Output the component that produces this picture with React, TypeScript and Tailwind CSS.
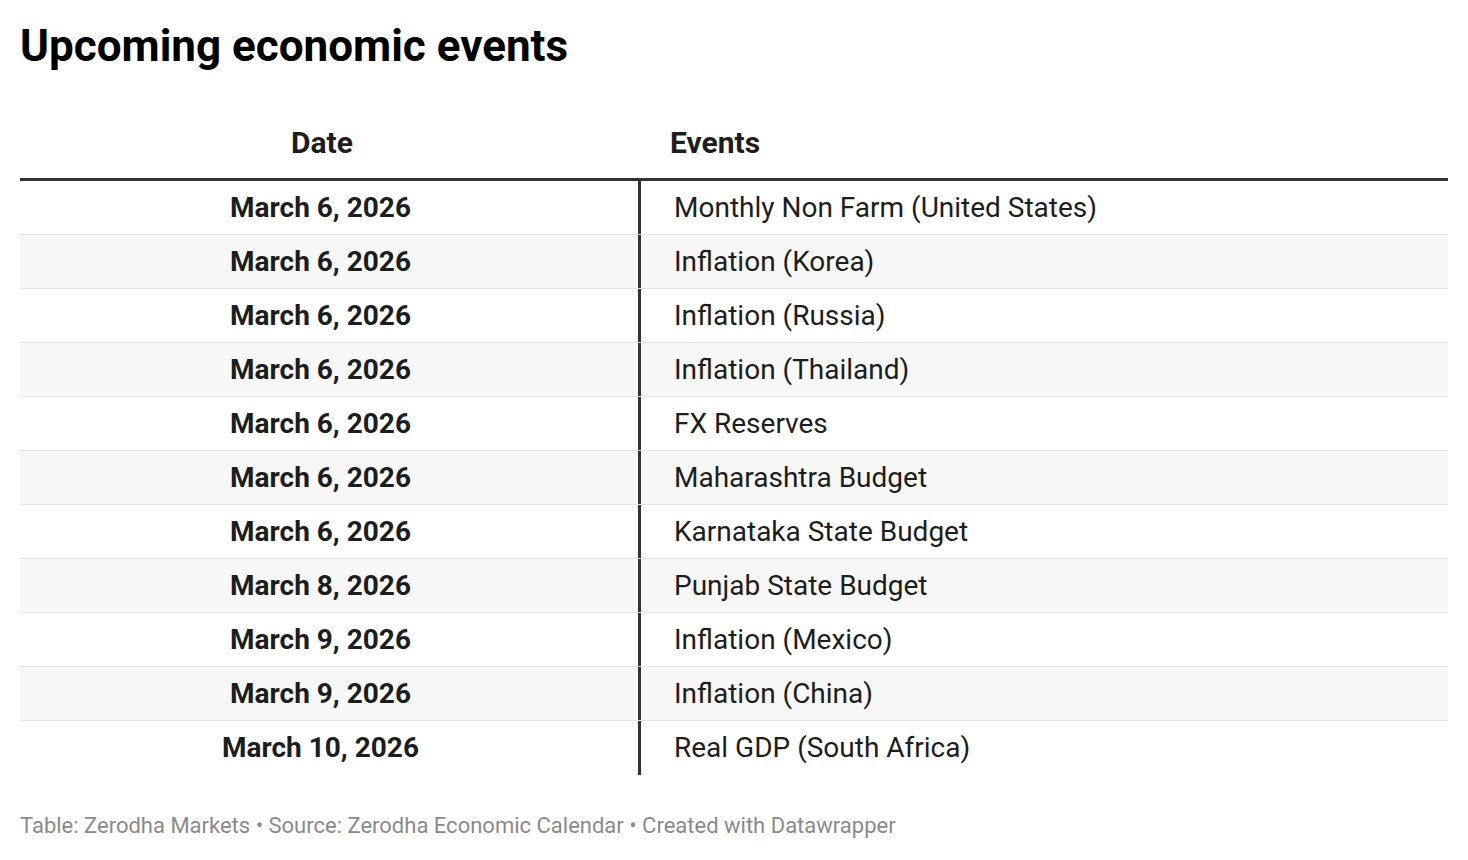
const rows: [string, string][] = [
  ["March 6, 2026", "Monthly Non Farm (United States)"],
  ["March 6, 2026", "Inflation (Korea)"],
  ["March 6, 2026", "Inflation (Russia)"],
  ["March 6, 2026", "Inflation (Thailand)"],
  ["March 6, 2026", "FX Reserves"],
  ["March 6, 2026", "Maharashtra Budget"],
  ["March 6, 2026", "Karnataka State Budget"],
  ["March 8, 2026", "Punjab State Budget"],
  ["March 9, 2026", "Inflation (Mexico)"],
  ["March 9, 2026", "Inflation (China)"],
  ["March 10, 2026", "Real GDP (South Africa)"],
];

export default function App() {
  return (
    <div className="min-h-screen bg-white px-5 pt-[20px] font-['Roboto',sans-serif] text-[#1d1d1d]">
      <h1 className="text-[44px] font-bold leading-[52px] text-black">Upcoming economic events</h1>

      <div className="mt-[41px] w-[1428px]">
        <div className="flex h-[68px] items-center border-b-[3px] border-[#333333] pb-[6px] text-[30px] font-bold">
          <div className="w-[621px] pr-[17px] text-center">Date</div>
          <div className="pl-[29px]">Events</div>
        </div>
        {rows.map(([date, event], i) => (
          <div
            key={i}
            className={`flex h-[54px] ${i % 2 === 1 ? "bg-[#f7f7f7]" : "bg-white"} ${
              i < rows.length - 1 ? "border-b border-[#e5e5e5]" : ""
            }`}
          >
            <div className="flex w-[621px] items-center justify-center border-r-[3px] border-[#333333] pr-[17px] text-[28px] font-bold">
              {date}
            </div>
            <div className="flex items-center pl-[33px] text-[28px]">{event}</div>
          </div>
        ))}
      </div>

      <p className="mt-[37px] text-[22px] leading-[28px] text-[#8a8a8a]">
        Table: Zerodha Markets • Source: Zerodha Economic Calendar • Created with Datawrapper
      </p>
    </div>
  );
}
